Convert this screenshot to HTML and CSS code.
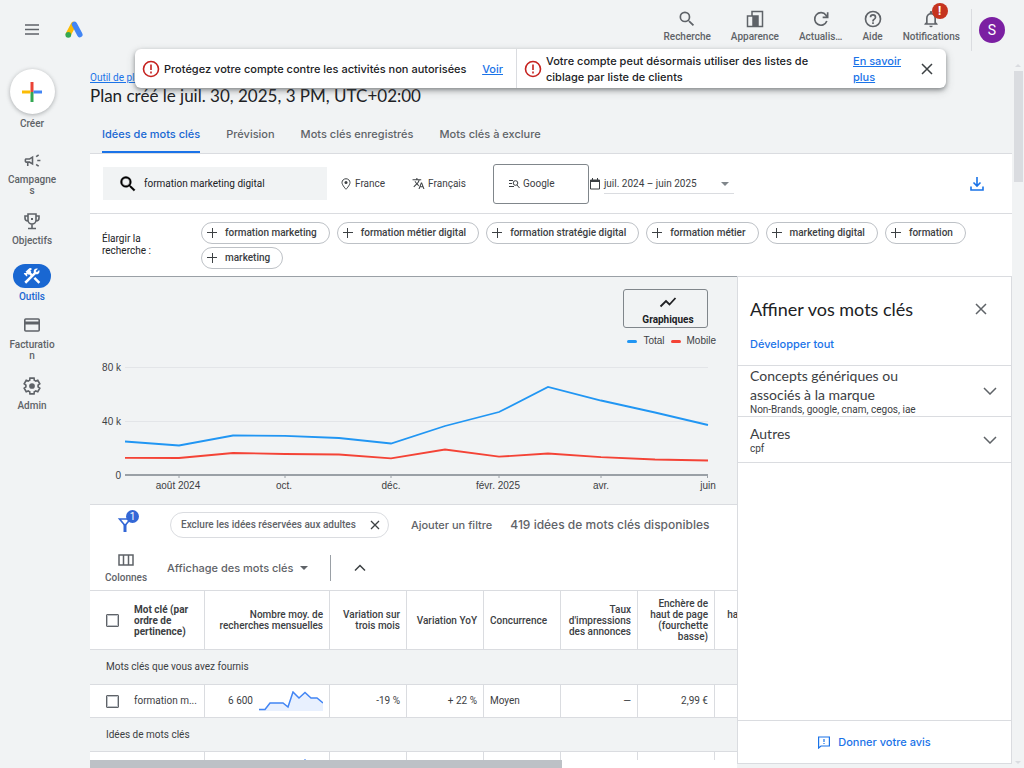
FILE: index.html
```
<!DOCTYPE html>
<html lang="fr">
<head>
    <meta charset="UTF-8">
    <meta name="viewport" content="width=device-width, initial-scale=1.0">
    <title>Outil de planification des mots clés</title>
    <link rel="stylesheet" href="styles.css">
</head>
<body>
    <header class="topbar">
        <button class="icon-button" aria-label="Menu">
            <svg width="20" height="20" viewBox="0 0 20 20" fill="none" stroke="#5f6368" stroke-width="1.500"><path d="M3 5h14M3 9.500h14M3 14h14"/></svg>
        </button>
        <a class="logo" href="#" aria-label="Accueil">
            <svg width="20" height="20" viewBox="0 0 20 20" fill="none" stroke-linecap="round" stroke-width="5.500">
                <path d="M9.500 4.500 4.500 14" stroke="#fbbc04"/>
                <path d="M10.500 4.500 15.800 14.500" stroke="#4285f4"/>
                <circle cx="4.300" cy="14.800" r="2.900" fill="#34a853"/>
            </svg>
        </a>
        <div class="top-actions">
            <button class="top-action">
                <svg width="20" height="20" viewBox="0 0 24 24"><path fill="currentColor" d="M15.500 14h-.79l-.28-.27A6.470 6.470 0 0 0 16 9.500 6.500 6.500 0 1 0 9.500 16c1.610 0 3.090-.59 4.230-1.570l.27.28v.79l5 4.990L20.490 19l-4.990-5zm-6 0a4.500 4.500 0 1 1 0-9 4.500 4.500 0 0 1 0 9z"/></svg>
                <span>Recherche</span>
            </button>
            <button class="top-action">
                <svg width="20" height="20" viewBox="0 0 20 20" fill="none" stroke="currentColor" stroke-width="1.500"><path d="M7 7V2.500h10.500v15H2.500V7H8"/><path d="M8 7h5v10H8z" fill="currentColor"/></svg>
                <span>Apparence</span>
            </button>
            <button class="top-action">
                <svg width="20" height="20" viewBox="0 0 24 24" fill="none" stroke="currentColor" stroke-width="2"><path d="M19 14.500A7.500 7.500 0 1 1 18 7.500l1.500 2M20 4v6h-6"/></svg>
                <span>Actualis…</span>
            </button>
            <button class="top-action">
                <svg width="20" height="20" viewBox="0 0 24 24"><path fill="currentColor" d="M11 18h2v-2h-2v2zm1-16a10 10 0 1 0 0 20 10 10 0 0 0 0-20zm0 18a8 8 0 1 1 0-16 8 8 0 0 1 0 16zm0-14a4 4 0 0 0-4 4h2a2 2 0 1 1 4 0c0 2-3 1.750-3 5h2c0-2.250 3-2.500 3-5a4 4 0 0 0-4-4z"/></svg>
                <span>Aide</span>
            </button>
            <button class="top-action">
                <svg width="20" height="20" viewBox="0 0 24 24"><path fill="currentColor" d="M12 22a2 2 0 0 0 2-2h-4a2 2 0 0 0 2 2zm6-6v-5c0-3.070-1.630-5.640-4.500-6.320V4a1.500 1.500 0 0 0-3 0v.68C7.640 5.360 6 7.920 6 11v5l-2 2v1h16v-1l-2-2zm-2 1H8v-6c0-2.480 1.510-4.500 4-4.500s4 2.020 4 4.500v6z"/></svg>
                <span>Notifications</span>
                <span class="alert-badge">!</span>
            </button>
        </div>
        <button class="avatar" aria-label="Compte">S</button>
    </header>

    <aside class="banner">
        <div class="banner-item banner-left">
            <svg width="18" height="18" viewBox="0 0 18 18" fill="none" stroke="#c5221f" stroke-width="1.600"><circle cx="9" cy="9" r="7.500"/><path d="M9 4.500v5.500M9 11.500v2"/></svg>
            <span class="banner-text">Protégez votre compte contre les activités non autorisées</span>
            <a href="#">Voir</a>
        </div>
        <div class="banner-item banner-right">
            <svg width="18" height="18" viewBox="0 0 18 18" fill="none" stroke="#c5221f" stroke-width="1.600"><circle cx="9" cy="9" r="7.500"/><path d="M9 4.500v5.500M9 11.500v2"/></svg>
            <span class="banner-text">Votre compte peut désormais utiliser des listes de ciblage par liste de clients</span>
            <a href="#">En savoir plus</a>
            <button class="close-button" aria-label="Fermer">
                <svg width="12" height="12" viewBox="0 0 12 12" stroke="#3c4043" stroke-width="1.500"><path d="M1 1l10 10M11 1 1 11"/></svg>
            </button>
        </div>
    </aside>

    <div class="shell">
        <nav class="sidebar">
            <a class="create" href="#">
                <span class="create-circle">
                    <svg width="20" height="20" viewBox="0 0 20 20" stroke-width="3"><path d="M10 0v10" stroke="#ea4335"/><path d="M10 10v10" stroke="#34a853"/><path d="M0 10h8.500" stroke="#fbbc04"/><path d="M11.500 10H20" stroke="#4285f4"/></svg>
                </span>
                Créer
            </a>
            <a class="nav-item" href="#">
                <span class="nav-icon"><svg width="19" height="19" viewBox="0 0 24 24"><path fill="currentColor" d="M18 11v2h4v-2h-4zm-2 6.610c.96.710 2.210 1.650 3.200 2.390.4-.53.8-1.070 1.200-1.600-.99-.74-2.240-1.680-3.200-2.400-.4.540-.8 1.080-1.200 1.610zM20.400 5.600c-.4-.53-.8-1.070-1.200-1.600-.99.740-2.240 1.680-3.200 2.400.4.530.8 1.070 1.200 1.600.96-.72 2.210-1.650 3.200-2.400zM4 9c-1.100 0-2 .9-2 2v2c0 1.100.9 2 2 2h1v4h2v-4h1l5 3V6L8 9H4zm5.030 1.710L11 9.530v4.940l-1.970-1.180-.48-.29H4v-2h4.550l.48-.29z"/></svg></span>
                Campagne<br>s
            </a>
            <a class="nav-item" href="#">
                <span class="nav-icon"><svg width="18" height="18" viewBox="0 0 18 18" fill="none" stroke="currentColor" stroke-width="1.600"><path d="M5 2h8v6a4 4 0 0 1-8 0zM5 4H2v2a3 3 0 0 0 3 3M13 4h3v2a3 3 0 0 1-3 3M9 12v4M5 16.500h8"/><path d="M8 6h2v2H8z" stroke="none" fill="currentColor"/></svg></span>
                Objectifs
            </a>
            <a class="nav-item active" href="#">
                <span class="nav-icon"><svg width="20" height="20" viewBox="0 0 24 24" fill="#fff"><path d="M13.780 15.170l2.120-2.120 6 6-2.120 2.120z"/><path d="M17.500 10c1.930 0 3.500-1.570 3.500-3.500 0-.58-.16-1.120-.41-1.600l-2.700 2.700-1.490-1.490 2.700-2.700c-.48-.25-1.020-.41-1.600-.41C15.570 3 14 4.570 14 6.500c0 .41.080.8.210 1.160l-1.850 1.850-1.780-1.780.71-.71-1.410-1.410L12 3.490a3 3 0 0 0-4.240 0L4.220 7.030l1.410 1.410H2.810l-.71.71 3.540 3.540.71-.71V9.150l1.410 1.410.71-.71 1.780 1.780-7.410 7.410 2.120 2.120L16.340 9.790c.36.13.75.21 1.160.21z"/></svg></span>
                Outils
            </a>
            <a class="nav-item" href="#">
                <span class="nav-icon"><svg width="18" height="18" viewBox="0 0 18 18" fill="none" stroke="currentColor" stroke-width="1.600"><rect x="1.800" y="3" width="14.400" height="12" rx="1"/><path d="M2 7h14" stroke-width="3"/></svg></span>
                Facturatio<br>n
            </a>
            <a class="nav-item" href="#">
                <span class="nav-icon"><svg width="18" height="18" viewBox="1 1 22 22" fill="none" stroke="currentColor" stroke-width="2"><path d="M19.430 12.980c.04-.32.070-.64.070-.98s-.03-.66-.07-.98l2.110-1.650-2.490-4.320-2.490 1c-.52-.4-1.080-.73-1.690-.98L14.490 2.420h-5l-.36 2.650c-.61.25-1.170.59-1.690.98l-2.490-1-2.490 4.320 2.110 1.650a7.800 7.800 0 0 0 0 1.960l-2.110 1.650 2.490 4.320 2.490-1c.52.4 1.080.73 1.690.98l.36 2.650h5l.38-2.650c.61-.25 1.170-.59 1.690-.98l2.490 1 2.490-4.320z"/><circle cx="12" cy="12" r="3.500" fill="currentColor" stroke="none"/></svg></span>
                Admin
            </a>
        </nav>

        <main class="main">
            <div class="heading">
                <a class="breadcrumb" href="#">Outil de planification</a>
                <h1>Plan créé le juil. 30, 2025, 3 PM, UTC+02:00</h1>
            </div>
            <nav class="tabs">
                <a class="tab selected" href="#">Idées de mots clés</a>
                <a class="tab" href="#">Prévision</a>
                <a class="tab" href="#">Mots clés enregistrés</a>
                <a class="tab" href="#">Mots clés à exclure</a>
            </nav>

            <div class="search-row">
                <label class="search-box">
                    <svg width="20" height="20" viewBox="0 0 24 24"><path fill="#000" stroke="#000" stroke-width=".5" d="M15.500 14h-.79l-.28-.27A6.470 6.470 0 0 0 16 9.500 6.500 6.500 0 1 0 9.500 16c1.610 0 3.090-.59 4.230-1.570l.27.28v.79l5 4.990L20.490 19l-4.990-5zm-6 0a4.500 4.500 0 1 1 0-9 4.500 4.500 0 0 1 0 9z"/></svg>
                    <input type="text" value="formation marketing digital" aria-label="Mots clés">
                </label>
                <button class="setting place">
                    <svg width="12" height="12" viewBox="0 0 24 24" fill="none" stroke="currentColor" stroke-width="2"><path d="M12 1.500c-4.500 0-8 3.500-8 7.500 0 5.500 8 13.500 8 13.500s8-8 8-13.500c0-4-3.500-7.500-8-7.500z"/><circle cx="12" cy="9" r="3" fill="currentColor" stroke="none"/></svg>
                    France
                </button>
                <button class="setting language">
                    <svg width="13" height="13" viewBox="0 0 24 24"><path fill="currentColor" d="M12.870 15.070l-2.540-2.510.03-.03A17.520 17.520 0 0 0 14.070 6H17V4h-7V2H8v2H1v2h11.170C11.500 7.920 10.440 9.750 9 11.350 8.070 10.320 7.300 9.190 6.690 8h-2c.73 1.630 1.730 3.170 2.980 4.560l-5.090 5.020L4 19l5-5 3.110 3.110.76-2.040zM18.500 10h-2L12 22h2l1.120-3h4.750L21 22h2l-4.500-12zm-2.620 7l1.620-4.330L19.120 17h-3.240z"/></svg>
                    Français
                </button>
                <button class="setting network">
                    <svg width="12" height="12" viewBox="0 0 12 12" fill="none" stroke="currentColor"><path d="M1 2.500h4M1 5.500h3M1 8.500h5M9 7l2.500 3"/><circle cx="7.500" cy="5" r="2.300"/></svg>
                    Google
                </button>
                <button class="date-range">
                    <svg width="12" height="12" viewBox="0 0 12 12" fill="none" stroke="#3c4043"><path d="M1.500 2h9v9h-9zM3.500 0v3M8.500 0v3"/><path d="M1 3h10" stroke-width="2"/></svg>
                    <span class="date-value">juil. 2024 – juin 2025 <i class="caret grey"></i></span>
                </button>
                <button class="download" aria-label="Télécharger">
                    <svg width="14" height="14" viewBox="0 0 14 14" fill="none" stroke="#1a73e8" stroke-width="1.600"><path d="M7 0v8.500M3.500 5.500 7 9 10.500 5.500M1 9.500V13h12V9.500"/></svg>
                </button>
            </div>

            <div class="expand-row">
                <span class="expand-label">Élargir la recherche :</span>
                <div class="chips">
                    <button class="chip">formation marketing</button>
                    <button class="chip">formation métier digital</button>
                    <button class="chip">formation stratégie digital</button>
                    <button class="chip">formation métier</button>
                    <button class="chip">marketing digital</button>
                    <button class="chip">formation</button>
                    <button class="chip">marketing</button>
                </div>
            </div>

            <div class="content">
                <section class="results">
                    <div class="chart-area">
                        <div class="chart-head">
                            <button class="chart-toggle">
                                <svg width="18" height="18" viewBox="0 0 18 18" fill="none" stroke="#202124" stroke-width="1.800"><path d="M1.500 12.500 7 7l3.500 3.500L16.500 4"/></svg>
                                Graphiques
                            </button>
                            <div class="legend"><i class="key total"></i>Total<i class="key mobile"></i>Mobile</div>
                        </div>
                        <svg class="chart" viewBox="0 0 647 154" role="img" aria-label="Volume de recherche">
                            <path class="grid" d="M35 17.500h583M35 71.500h583"/>
                            <path class="axis" d="M35 125h583"/>
                            <path class="ticks" d="M89 125v3M195 125v3M301 125v3M409 125v3M511 125v3M617.500 125v3"/>
                            <polyline class="line-total" points="35,91.500 89,95.500 143,85.500 195,85.800 249,88 301,93.500 355,76 409,62 458,37 511,50.500 565,62.500 618,75"/>
                            <polyline class="line-mobile" points="35,107.800 89,108 143,103 195,104 249,104.500 301,108.300 355,99.500 409,106.700 458,103.500 511,107.200 565,109.500 618,110.500"/>
                            <g class="y-labels"><text x="31" y="21">80 k</text><text x="31" y="75">40 k</text><text x="31" y="129">0</text></g>
                            <g class="x-labels"><text x="88" y="139">août 2024</text><text x="194" y="139">oct.</text><text x="301" y="139">déc.</text><text x="408" y="139">févr. 2025</text><text x="511" y="139">avr.</text><text x="618" y="139">juin</text></g>
                        </svg>
                    </div>

                    <div class="filters">
                        <button class="filter-button" aria-label="Filtres">
                            <svg width="16" height="16" viewBox="0 0 16 16" fill="none" stroke="#3367d6" stroke-width="1.600"><path d="M2.500 2h11L8 8.500z"/><path d="M8 7v8" stroke-width="3"/></svg>
                            <span class="count-badge">1</span>
                        </button>
                        <button class="filter-chip">Exclure les idées réservées aux adultes
                            <svg width="10" height="10" viewBox="0 0 10 10" stroke="#3c4043" stroke-width="1.300"><path d="M1 1l8 8M9 1 1 9"/></svg>
                        </button>
                        <button class="add-filter">Ajouter un filtre</button>
                        <span class="idea-count">419 idées de mots clés disponibles</span>
                    </div>
                    <div class="view-bar">
                        <button class="columns">
                            <svg width="16" height="14" viewBox="0 0 16 14" fill="none" stroke="#5f6368" stroke-width="1.500"><path d="M1 2h14v10H1zM5.500 2v10M10.500 2v10"/></svg>
                            Colonnes
                        </button>
                        <button class="view-select">Affichage des mots clés <i class="caret"></i></button>
                        <button class="collapse" aria-label="Réduire">
                            <svg width="12" height="8" viewBox="0 0 12 8" fill="none" stroke="#3c4043" stroke-width="1.500"><path d="M1 6.500l5-5 5 5"/></svg>
                        </button>
                    </div>

                    <div class="table-wrap">
                        <table>
                            <colgroup><col class="c-key"><col class="c-volume"><col span="6" class="c-std"></colgroup>
                            <thead>
                                <tr>
                                    <th class="left"><label class="key-cell"><input type="checkbox"><span>Mot clé (par ordre de pertinence)</span></label></th>
                                    <th>Nombre moy. de recherches mensuelles</th>
                                    <th>Variation sur trois mois</th>
                                    <th>Variation YoY</th>
                                    <th class="left">Concurrence</th>
                                    <th>Taux d'impressions des annonces</th>
                                    <th>Enchère de haut de page (fourchette basse)</th>
                                    <th>haut de page<br>&nbsp;</th>
                                </tr>
                            </thead>
                            <tbody>
                                <tr class="group"><td colspan="8">Mots clés que vous avez fournis</td></tr>
                                <tr>
                                    <td class="left"><label class="key-cell"><input type="checkbox"><span>formation m...</span></label></td>
                                    <td><span class="volume">6 600
                                        <svg width="64" height="20" viewBox="0 0 64 20"><path fill="#e8f0fe" d="M0 18h6l5-6h13l5 4 5-15 6 6 6-6 6 6h6l6 5v8H0z"/><path fill="none" stroke="#4285f4" stroke-width="1.500" d="M0 18.500h6l5-6.500h13l5 4 5-15 6 6 6-5.500 6 5.500h6l6 5"/></svg></span></td>
                                    <td>-19 %</td>
                                    <td>+ 22 %</td>
                                    <td class="left">Moyen</td>
                                    <td>—</td>
                                    <td>2,99 €</td>
                                    <td></td>
                                </tr>
                                <tr class="group"><td colspan="8">Idées de mots clés</td></tr>
                                <tr>
                                    <td></td>
                                    <td><span class="volume"><svg width="64" height="20" viewBox="0 0 64 20"><path fill="#e8f0fe" d="M0 18h30l10-8 6-8 6 8 12 4v6H0z"/><path fill="none" stroke="#4285f4" stroke-width="1.500" d="M0 18h30l10-8 6-8 6 8 12 4"/></svg></span></td>
                                    <td></td><td></td><td></td><td></td><td></td><td></td>
                                </tr>
                            </tbody>
                        </table>
                    </div>
                    <div class="h-scroll"><div class="h-thumb"></div></div>
                </section>

                <aside class="refine">
                    <div class="refine-head">
                        <h2>Affiner vos mots clés</h2>
                        <button class="close-button" aria-label="Fermer">
                            <svg width="12" height="12" viewBox="0 0 12 12" stroke="#5f6368" stroke-width="1.500"><path d="M1 1l10 10M11 1 1 11"/></svg>
                        </button>
                    </div>
                    <button class="expand-all">Développer tout</button>
                    <button class="refine-item">
                        <span><span class="refine-title">Concepts génériques ou associés à la marque</span><span class="refine-sub">Non-Brands, google, cnam, cegos, iae</span></span>
                        <svg width="14" height="8" viewBox="0 0 14 8" fill="none" stroke="#5f6368" stroke-width="1.500"><path d="M1 1l6 6 6-6"/></svg>
                    </button>
                    <button class="refine-item">
                        <span><span class="refine-title">Autres</span><span class="refine-sub">cpf</span></span>
                        <svg width="14" height="8" viewBox="0 0 14 8" fill="none" stroke="#5f6368" stroke-width="1.500"><path d="M1 1l6 6 6-6"/></svg>
                    </button>
                    <button class="feedback">
                        <svg width="12" height="13" viewBox="0 0 12 13" fill="none" stroke="#1a73e8" stroke-width="1.200"><path d="M.6 12V1h10.800v9H3z"/><path d="M6 3v3M6 7v1"/></svg>
                        Donner votre avis
                    </button>
                </aside>
            </div>
        </main>
        <div class="v-scroll"><i class="arrow-up"></i><div class="v-thumb"></div><i class="arrow-down"></i></div>
    </div>
</body>
</html>
```
FILE: styles.css
```
* {
    box-sizing: border-box;
}
body {
    margin: 0;
    height: 100vh;
    display: flex;
    flex-direction: column;
    overflow: hidden;
    background: #f1f3f4;
    color: #3c4043;
    font-family: Roboto, sans-serif;
    font-size: 10px;
    line-height: 16px;
}
button {
    padding: 0;
    border: none;
    background: none;
    color: inherit;
    font: inherit;
    white-space: nowrap;
    cursor: pointer;
}
a {
    color: #1a73e8;
}
svg {
    flex: none;
}

/* top bar */
.topbar {
    display: flex;
    align-items: center;
    flex: none;
    height: 60px;
    padding: 0 19px 0 22px;
}
.icon-button,
.logo {
    display: flex;
}
.logo {
    margin-left: 22px;
}
.top-actions {
    display: flex;
    gap: 20px;
    height: 42px;
    margin-right: 7px;
    margin-left: auto;
    padding-right: 11px;
    border-right: 1px solid #dadce0;
}
.top-action {
    position: relative;
    display: flex;
    flex-direction: column;
    align-items: center;
    height: 36px;
    color: #5f6368;
    font-weight: 500;
}
.alert-badge {
    position: absolute;
    top: -6px;
    left: 29px;
    width: 16px;
    border-radius: 8px;
    background: #c5341f;
    color: #fff;
    font-size: 12px;
    font-weight: 700;
}
.avatar {
    width: 26px;
    height: 26px;
    border-radius: 50%;
    background: #7b1fa2;
    color: #fff;
    font-size: 14px;
}

/* alert banner, lies over the page */
.banner {
    position: absolute;
    z-index: 2;
    top: 49px;
    left: 135px;
    right: 78px;
    display: flex;
    height: 39px;
    border-radius: 6px;
    background: #fff;
    box-shadow: 0 2px 4px rgba(60, 64, 67, .5), 0 3px 10px rgba(60, 64, 67, .2);
    color: #202124;
    font: 500 11px/16px Inter, sans-serif;
}
.banner-item {
    display: flex;
    align-items: center;
    gap: 4px;
    padding-left: 7px;
}
.banner-left {
    flex: 0 0 382px;
    padding-right: 13px;
    border-right: 1px solid #dadce0;
    white-space: nowrap;
}
.banner-left a {
    margin-left: auto;
}
.banner-right {
    flex: 1;
}
.banner-right .banner-text {
    flex: 1;
    padding-right: 16px;
}
.banner-right a {
    width: 51px;
}
.close-button {
    display: flex;
    margin: 0 13px;
}

.shell {
    display: flex;
    flex: 1;
    min-height: 0;
}

/* left navigation */
.sidebar {
    flex: 0 0 90px;
    padding: 9px 26px 0 0;
}
.sidebar a {
    display: flex;
    flex-direction: column;
    align-items: center;
    color: #5f6368;
    font-weight: 500;
    line-height: 11px;
    text-align: center;
    text-decoration: none;
}
.create-circle {
    display: flex;
    align-items: center;
    justify-content: center;
    width: 45px;
    height: 45px;
    margin-bottom: 4px;
    border-radius: 50%;
    background: #fff;
    box-shadow: 0 1px 4px rgba(60, 64, 67, .4);
}
.sidebar .create {
    margin-bottom: 22px;
}
.nav-icon {
    display: flex;
    align-items: center;
    justify-content: center;
    width: 38px;
    height: 18px;
    margin-bottom: 5px;
}
.sidebar .nav-item {
    margin-bottom: 16px;
}
.sidebar .active {
    margin: 18px 0 14px;
    color: #1967d2;
}
.active .nav-icon {
    height: 24px;
    margin-bottom: 3px;
    border-radius: 12px;
    background: #1967d2;
}

/* page heading and tabs */
.main {
    display: flex;
    flex-direction: column;
    flex: 1;
    min-width: 0;
}
.heading {
    height: 54px;
    padding-top: 10px;
}
.breadcrumb {
    display: block;
}
h1 {
    margin: 0;
    color: #202124;
    font: 400 17px/20px Lato, sans-serif;
}
.tabs {
    display: flex;
    gap: 26px;
    height: 40px;
    padding-left: 12px;
    border-bottom: 1px solid #dadce0;
}
.tab {
    height: 39px;
    color: #5f6368;
    font: 500 11px/40px Inter, sans-serif;
    text-decoration: none;
}
.tab.selected {
    border-bottom: 2px solid #1a73e8;
    color: #1967d2;
}

/* search settings */
.search-row {
    display: flex;
    align-items: center;
    height: 60px;
    padding: 0 28px 0 13px;
    border-bottom: 1px solid #dadce0;
    background: #fff;
}
.search-box {
    display: flex;
    align-items: center;
    gap: 6px;
    width: 224px;
    height: 33px;
    padding-left: 15px;
    background: #f1f3f4;
}
.search-box input {
    flex: 1;
    min-width: 0;
    padding: 0;
    border: none;
    background: none;
    color: #202124;
    font: inherit;
}
.setting {
    display: flex;
    align-items: center;
    gap: 3px;
}
.place {
    margin-left: 13px;
}
.language {
    margin-left: 27px;
}
.network {
    width: 96px;
    height: 40px;
    margin-left: 27px;
    padding-left: 14px;
    border: 1px solid #80868b;
    border-radius: 3px;
}
.date-range {
    display: flex;
    align-items: center;
    gap: 3px;
}
.date-value {
    display: flex;
    align-items: center;
    justify-content: space-between;
    width: 130px;
    padding: 2px 5px 1px 0;
    border-bottom: 1px solid #dadce0;
}
.caret {
    border: 4px solid transparent;
    border-top-color: #5f6368;
    border-bottom: none;
}
.caret.grey {
    border-top-color: #80868b;
}
.download {
    display: flex;
    margin-left: auto;
}
.expand-row {
    display: flex;
    align-items: center;
    height: 62px;
    padding-left: 12px;
    background: #fff;
}
.expand-label {
    width: 99px;
    padding-right: 24px;
    color: #202124;
    line-height: 12px;
}
.chips {
    display: flex;
    flex: 1;
    flex-wrap: wrap;
    gap: 3px 7px;
}
.chip {
    display: flex;
    align-items: center;
    height: 22px;
    padding: 0 12px 0 5px;
    border: 1px solid #bdc1c6;
    border-radius: 11px;
    font-weight: 500;
}
.chip::before {
    content: "";
    width: 10px;
    height: 10px;
    margin-right: 8px;
    background:
        linear-gradient(#3c4043, #3c4043) center / 10px 1px no-repeat,
        linear-gradient(#3c4043, #3c4043) center / 1px 10px no-repeat;
}

/* results */
.content {
    display: flex;
    flex: 1;
    min-height: 0;
}
.results {
    display: flex;
    flex-direction: column;
    flex: 1;
    min-width: 0;
    background: #fff;
}
.chart-area {
    flex: none;
    border-top: 1px solid #9aa0a6;
    border-bottom: 1px solid #dadce0;
    background: #f1f3f4;
}
.chart-head {
    display: flex;
    flex-direction: column;
    align-items: flex-end;
    padding: 12px 21px 0 0;
}
.chart-toggle {
    display: flex;
    flex-direction: column;
    align-items: center;
    width: 85px;
    height: 39px;
    margin-right: 8px;
    padding: 4px 0 0 5px;
    border: 1px solid #80868b;
    border-radius: 3px;
    color: #202124;
    font-weight: 700;
}
.legend {
    display: flex;
    align-items: center;
    gap: 6px;
    height: 22px;
    padding-top: 4px;
    font-family: "Liberation Sans", sans-serif;
}
.key {
    width: 10px;
    height: 3px;
    border-radius: 2px;
}
.total {
    background: #2196f3;
}
.mobile {
    background: #f44336;
}
.chart {
    display: block;
    width: 100%;
    font-family: "Liberation Sans", sans-serif;
    font-size: 10px;
}
.chart text {
    fill: #3c4043;
}
.grid {
    stroke: #e3e5e8;
}
.axis,
.ticks {
    stroke: #9aa0a6;
}
.axis {
    stroke-width: 2;
}
.line-total,
.line-mobile {
    fill: none;
    stroke: #2196f3;
    stroke-width: 1.8;
}
.line-mobile {
    stroke: #f44336;
}
.x-labels {
    text-anchor: middle;
}
.y-labels {
    text-anchor: end;
}
.filters {
    display: flex;
    align-items: center;
    flex: none;
    height: 40px;
    padding-left: 27px;
    color: #5f6368;
}
.filter-button {
    position: relative;
    display: flex;
}
.count-badge {
    position: absolute;
    top: -7px;
    left: 9px;
    width: 13px;
    border-radius: 7px;
    background: #3367d6;
    color: #fff;
    line-height: 13px;
}
.filter-chip {
    display: flex;
    align-items: center;
    gap: 14px;
    height: 26px;
    margin: 0 22px 0 37px;
    padding: 0 8px 0 10px;
    border: 1px solid #dadce0;
    border-radius: 13px;
    font-weight: 500;
}
.add-filter,
.view-select {
    font: 500 11px/16px Inter, sans-serif;
}
.add-filter {
    margin-right: 18px;
}
.idea-count {
    font: 500 12px/20px Inter, sans-serif;
    white-space: nowrap;
}
.view-bar {
    display: flex;
    align-items: center;
    flex: none;
    height: 45px;
    padding-left: 15px;
    color: #5f6368;
}
.columns {
    display: flex;
    flex-direction: column;
    align-items: center;
    gap: 3px;
    padding-top: 4px;
    font-weight: 500;
}
.view-select {
    display: flex;
    align-items: center;
    gap: 6px;
    height: 26px;
    margin-left: 20px;
    padding-right: 22px;
    border-right: 1px solid #9aa0a6;
}
.collapse {
    display: flex;
    margin-left: 23px;
}

.table-wrap {
    flex: 1;
    min-height: 0;
    overflow: hidden;
}
table {
    width: 702px;
    border-collapse: separate;
    border-spacing: 0;
    table-layout: fixed;
}
.c-key {
    width: 115px;
}
.c-volume {
    width: 125px;
}
.c-std {
    width: 77px;
}
th,
td {
    height: 33px;
    padding: 0 6px;
    border-top: 1px solid #dadce0;
    border-right: 1px solid #dadce0;
    text-align: right;
}
th {
    height: 60px;
    border-bottom: 1px solid #dadce0;
    font-weight: 500;
    line-height: 11px;
}
.left {
    text-align: left;
}
.group td {
    height: 34px;
    padding-left: 16px;
    border-right: none;
    background: #f1f3f4;
    text-align: left;
}
.group:first-child td {
    border-top: none;
}
.key-cell {
    display: flex;
    align-items: center;
    gap: 15px;
    padding-left: 10px;
    white-space: nowrap;
}
th .key-cell {
    font-weight: 700;
    white-space: normal;
}
input[type="checkbox"] {
    appearance: none;
    flex: none;
    width: 13px;
    height: 13px;
    margin: 0;
    border: 1px solid #5f6368;
    border-radius: 1px;
    outline: 1px solid #bdc1c6;
    outline-offset: -2px;
}
.volume {
    display: flex;
    align-items: center;
    justify-content: flex-end;
    gap: 6px;
}
.h-scroll {
    flex: none;
    height: 8px;
    background: #fff;
}
.h-thumb {
    width: 73%;
    height: 8px;
    background: #bdc1c6;
}

/* refine panel */
.refine {
    display: flex;
    flex-direction: column;
    flex: 0 0 275px;
    margin-bottom: 4px;
    border: 1px solid #dadce0;
    background: #fff;
}
.refine-head {
    display: flex;
    align-items: center;
    justify-content: space-between;
    padding: 20px 11px 0 12px;
}
h2 {
    margin: 0;
    color: #202124;
    font: 400 18px/24px Lato, sans-serif;
}
.expand-all {
    padding: 15px 12px 13px;
    color: #1a73e8;
    font: 500 11px/16px Inter, sans-serif;
    text-align: left;
}
.refine-item {
    display: flex;
    align-items: center;
    justify-content: space-between;
    min-height: 47px;
    padding: 0 14px 0 12px;
    border-top: 1px solid #dadce0;
    text-align: left;
    white-space: normal;
}
.refine-item + .refine-item {
    border-bottom: 1px solid #dadce0;
}
.refine-title,
.refine-sub {
    display: block;
}
.refine-title {
    max-width: 170px;
    font: 400 14px/19px Lato, sans-serif;
}
.refine-sub {
    line-height: 12px;
}
.feedback {
    display: flex;
    align-items: center;
    justify-content: center;
    gap: 8px;
    height: 43px;
    margin-top: auto;
    border-top: 1px solid #dadce0;
    color: #1a73e8;
    font: 500 11px/16px Inter, sans-serif;
}

/* page scrollbar */
.v-scroll {
    display: flex;
    flex-direction: column;
    align-items: center;
    flex: 0 0 12px;
    padding: 4px 0;
}
.arrow-up,
.arrow-down {
    border: 3px solid transparent;
    border-bottom-color: #dadce0;
    border-top: none;
}
.arrow-down {
    margin-top: auto;
    border-top: 3px solid #dadce0;
    border-bottom: none;
}
.v-thumb {
    width: 9px;
    height: 111px;
    margin-top: 4px;
    background: #dadce0;
}
```
